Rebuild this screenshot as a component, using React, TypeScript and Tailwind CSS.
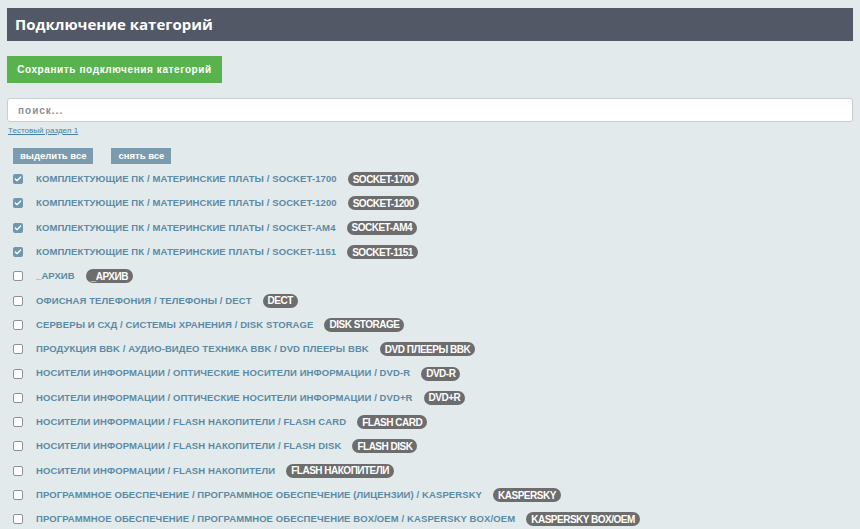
import { Check } from 'lucide-react';

const rows: { path: string; tag: string; checked?: boolean }[] = [
  { path: 'Комплектующие ПК / Материнские платы / SOCKET-1700', tag: 'SOCKET-1700', checked: true },
  { path: 'Комплектующие ПК / Материнские платы / SOCKET-1200', tag: 'SOCKET-1200', checked: true },
  { path: 'Комплектующие ПК / Материнские платы / SOCKET-AM4', tag: 'SOCKET-AM4', checked: true },
  { path: 'Комплектующие ПК / Материнские платы / SOCKET-1151', tag: 'SOCKET-1151', checked: true },
  { path: '_Архив', tag: '_АРХИВ' },
  { path: 'Офисная телефония / Телефоны / DECT', tag: 'DECT' },
  { path: 'Серверы и СХД / Системы хранения / Disk Storage', tag: 'DISK STORAGE' },
  { path: 'Продукция BBK / Аудио-видео техника BBK / DVD плееры BBK', tag: 'DVD ПЛЕЕРЫ BBK' },
  { path: 'Носители информации / Оптические носители информации / DVD-R', tag: 'DVD-R' },
  { path: 'Носители информации / Оптические носители информации / DVD+R', tag: 'DVD+R' },
  { path: 'Носители информации / Flash накопители / Flash Card', tag: 'FLASH CARD' },
  { path: 'Носители информации / Flash накопители / Flash Disk', tag: 'FLASH DISK' },
  { path: 'Носители информации / Flash накопители', tag: 'FLASH НАКОПИТЕЛИ' },
  { path: 'Программное обеспечение / Программное обеспечение (лицензии) / Kaspersky', tag: 'KASPERSKY' },
  { path: 'Программное обеспечение / Программное обеспечение BOX/OEM / Kaspersky BOX/OEM', tag: 'KASPERSKY BOX/OEM' },
];

export default function App() {
  return (
    <div className="min-h-screen bg-[#e3eaec] pt-2 px-[7px] font-['Liberation_Sans',Arial,sans-serif] overflow-hidden h-[529px]">
      {/* заголовок */}
      <div className="bg-[#525866] h-[33px] flex items-center px-2">
        <h1 className="text-white font-bold text-[15px] font-['Open_Sans',sans-serif]">Подключение категорий</h1>
      </div>

      <button className="mt-[15px] h-[27px] w-[215px] bg-[#58b34f] text-white font-bold text-[10px] tracking-[0.6px] flex items-center justify-center">
        Сохранить подключения категорий
      </button>

      <input
        type="text"
        placeholder="поиск..."
        className="mt-[15px] w-full h-[24px] bg-white border border-[#c9ced1] rounded-[3px] px-[10px] text-[10px] font-bold tracking-[1px] placeholder:text-[#8a8f93] outline-none"
      />
      <div className="mt-[1px] h-[10px] leading-[10px]">
        <a className="text-[8px] text-[#4a7fa6] underline ml-[1px]">Тестовый раздел 1</a>
      </div>

      <div className="mt-[15px] flex gap-[18px] pl-[6px]">
        <button className="h-[16px] px-[7px] bg-[#7b9cae] text-white font-bold text-[9.5px]">выделить все</button>
        <button className="h-[16px] px-[7px] bg-[#7b9cae] text-white font-bold text-[9.5px]">снять все</button>
      </div>

      <div className="mt-[3px] flex flex-col pl-[6px]">
        {rows.map((r) => (
          <div key={r.tag} className="h-[24.3px] flex items-center">
            {r.checked ? (
              <span className="w-[10px] h-[10px] rounded-[2px] bg-[#6f97ae] flex items-center justify-center">
                <Check className="w-[8px] h-[8px] text-white" strokeWidth={4} />
              </span>
            ) : (
              <span className="w-[10px] h-[10px] rounded-[2px] bg-white border border-[#8c9399]" />
            )}
            <span className="ml-[13px] text-[9.5px] font-bold uppercase text-[#5b8aa5] tracking-[0.1px]">{r.path}</span>
            <span className="ml-[11px] h-[14px] px-[5px] rounded-full bg-[#6d6d6d] text-white text-[10px] font-bold flex items-center tracking-[-0.5px]">
              {r.tag}
            </span>
          </div>
        ))}
      </div>
    </div>
  );
}
